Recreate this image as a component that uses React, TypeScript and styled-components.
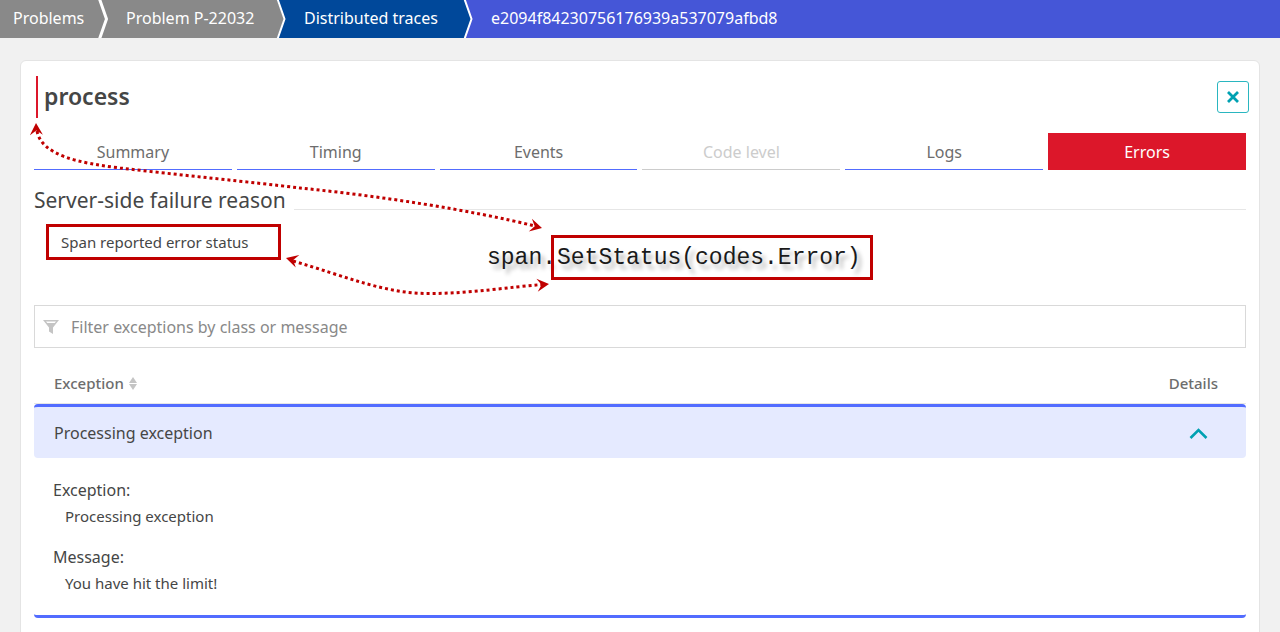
import React from "react";
import styled, { createGlobalStyle, css } from "styled-components";

const GlobalStyle = createGlobalStyle`
  *, *::before, *::after { box-sizing: border-box; }
  html, body, #root { min-height: 100%; }
  html { background: #f1f1f1; overflow: hidden; }
  body {
    margin: 0;
    background: #f1f1f1;
    color: #454646;
    font-family: "Noto Sans", "Open Sans", sans-serif;
    font-size: 16px;
    line-height: 24px;
  }
`;

const Breadcrumbs = styled.nav`
  display: flex;
  height: 38px;
  background: #4556d7;
`;

const Crumb = styled.a<{ $bg: string; $width?: number; $first?: boolean }>`
  flex: none;
  min-width: ${(p) => p.$width ?? 0}px;
  padding: 6px ${(p) => (p.$first ? 13 : 18)}px;
  background: ${(p) => p.$bg};
  color: #fff;
  text-decoration: none;
`;

const SeparatorSvg = styled.svg`
  flex: none;
  display: block;
`;

const Card = styled.main`
  position: relative;
  margin: 22px 20px 0;
  padding: 15px 13px 40px;
  background: #fff;
  border: 1px solid #e4e4e4;
  border-radius: 6px;
`;

const Header = styled.header`
  display: flex;
  align-items: center;
  justify-content: space-between;
  height: 42px;
  margin-right: -3px;
  margin-left: 2px;
`;

const Title = styled.h1`
  height: 42px;
  margin: 0;
  padding-left: 6px;
  border-left: 2px solid #dc172a;
  font-size: 23px;
  font-weight: 600;
  line-height: 40px;
`;

const CloseButton = styled.button`
  display: grid;
  place-items: center;
  width: 32px;
  height: 32px;
  padding: 0;
  background: #fff;
  border: 1px solid #2ab6c0;
  border-radius: 3px;
  color: #00a1b2;
`;

const Tabs = styled.div`
  display: grid;
  grid-template-columns: repeat(6, 1fr);
  gap: 5px;
  margin-top: 15px;
`;

const Tab = styled.button`
  height: 37px;
  padding: 2px 0 0;
  background: transparent;
  border: 0;
  border-bottom: 1px solid #526cff;
  color: #6d6d6d;
  font: inherit;

  &:disabled {
    color: #cccccc;
    border-bottom-color: #cccccc;
  }

  ${(p) =>
    p["aria-selected"] &&
    css`
      background: #dc172a;
      border-bottom-color: #dc172a;
      color: #fff;
    `}
`;

const SectionTitle = styled.h2`
  display: flex;
  align-items: flex-end;
  gap: 8px;
  margin: 14px 0 0;
  font-size: 21px;
  font-weight: 400;
  line-height: 32px;

  &::after {
    content: "";
    flex: 1;
    height: 1px;
    margin-bottom: 6px;
    background: #e6e6e6;
  }
`;

const ReasonRow = styled.div`
  display: flex;
  align-items: flex-start;
  height: 56px;
  margin: 8px 0 25px 12px;
`;

const Reason = styled.p`
  flex: none;
  width: 235px;
  height: 36px;
  margin: 0;
  padding: 0 12px;
  border: 3px solid #c00000;
  font-size: 15px;
  line-height: 30px;
`;

const CodeNote = styled.code`
  display: flex;
  margin: 11px 0 0 206px;
  color: #1a1a1a;
  font-family: "Liberation Mono", monospace;
  font-size: 23px;
  line-height: 38px;
  text-shadow: 4px 5px 4px rgba(0, 0, 0, 0.3);
  white-space: nowrap;
`;

const CodePrefix = styled.span`
  padding-top: 4px;
`;

const CodeHighlight = styled.span`
  margin-left: -5px;
  padding: 1px 9px 0 3px;
  border: 3px solid #c00000;
`;

const FilterBox = styled.label`
  display: flex;
  align-items: center;
  gap: 12px;
  height: 43px;
  padding: 0 8px;
  border: 1px solid #d9d9d9;
`;

const FilterInput = styled.input`
  flex: 1;
  min-width: 0;
  padding: 0;
  border: 0;
  outline: 0;
  background: transparent;
  color: #454646;
  font: inherit;

  &::placeholder {
    color: #898989;
    opacity: 1;
  }
`;

const ExceptionTable = styled.table`
  width: 100%;
  margin-top: 14px;
  border-spacing: 0;
`;

const HeadCell = styled.th<{ $right?: boolean }>`
  height: 42px;
  padding: 0 ${(p) => (p.$right ? 28 : 20)}px 0 20px;
  border-bottom: 1px solid #e6e6e6;
  color: #6d6d6d;
  font-size: 15px;
  font-weight: 500;
  text-align: ${(p) => (p.$right ? "right" : "left")};
`;

const SortButton = styled.button`
  display: inline-flex;
  align-items: center;
  gap: 5px;
  padding: 0;
  background: none;
  border: 0;
  color: inherit;
  font: inherit;
`;

const RowCell = styled.td<{ $right?: boolean }>`
  height: 54px;
  padding: 0 ${(p) => (p.$right ? 37 : 20)}px 0 20px;
  background: #e5eaff;
  border-top: 3px solid #526cff;
  border-radius: ${(p) => (p.$right ? "0 4px 4px 0" : "4px 0 0 4px")};
  text-align: ${(p) => (p.$right ? "right" : "left")};
`;

const ToggleButton = styled.button`
  display: inline-flex;
  padding: 0;
  background: none;
  border: 0;
  color: #00a1b2;
  vertical-align: middle;
`;

const DetailCell = styled.td`
  padding: 19px 19px 19px;
  border-bottom: 3px solid #526cff;
  border-radius: 4px;
  vertical-align: top;
`;

const Details = styled.dl`
  display: grid;
  gap: 15px;
  margin: 0;
`;

const DetailTerm = styled.dt`
  line-height: 26px;
`;

const DetailText = styled.dd`
  margin: 0 0 0 12px;
  font-size: 15px;
  line-height: 26px;
`;

const Arrows = styled.svg`
  position: absolute;
  top: 59px;
  left: 9px;
  pointer-events: none;
`;

function Separator({ from, to, line = 2 }: { from: string; to: string; line?: number }) {
  return (
    <SeparatorSvg width="10" height="38" viewBox="0 0 10 38" aria-hidden="true">
      <rect width="10" height="38" fill={to} />
      <path d="M0 0H1L8 19L1 38H0Z" fill={from} />
      <path d="M1.5 -1L8.5 19L1.5 39" fill="none" stroke="#fff" strokeWidth={line} />
    </SeparatorSvg>
  );
}

const ARROW_HEAD = "M0 0L-12 6.5L-7.500 0L-12 -6.5Z";

const tabs = ["Summary", "Timing", "Events", "Code level", "Logs", "Errors"];

export default function App() {
  return (
    <>
      <GlobalStyle />
      <Breadcrumbs aria-label="Breadcrumb">
        <Crumb href="#problems" $bg="#898989" $width={98} $first>Problems</Crumb>
        <Separator from="#898989" to="#898989" line={3} />
        <Crumb href="#problem" $bg="#898989" $width={168}>Problem P-22032</Crumb>
        <Separator from="#898989" to="#00489a" />
        <Crumb href="#traces" $bg="#00489a" $width={177}>Distributed traces</Crumb>
        <Separator from="#00489a" to="#4556d7" />
        <Crumb href="#trace" $bg="#4556d7">e2094f84230756176939a537079afbd8</Crumb>
      </Breadcrumbs>
      <Card>
        <Header>
          <Title>process</Title>
          <CloseButton aria-label="Close">
            <svg width="12" height="12" viewBox="0 0 12 12" aria-hidden="true">
              <path d="M1 1L11 11M11 1L1 11" stroke="currentColor" strokeWidth="2.8" />
            </svg>
          </CloseButton>
        </Header>
        <Tabs role="tablist">
          {tabs.map((name) => (
            <Tab key={name} role="tab" aria-selected={name === "Errors"} disabled={name === "Code level"}>
              {name}
            </Tab>
          ))}
        </Tabs>
        <SectionTitle>Server-side failure reason</SectionTitle>
        <ReasonRow>
          <Reason>Span reported error status</Reason>
          <CodeNote>
            <CodePrefix>span.</CodePrefix>
            <CodeHighlight>SetStatus(codes.Error)</CodeHighlight>
          </CodeNote>
        </ReasonRow>
        <FilterBox>
          <svg width="16" height="15" viewBox="0 0 16 15" aria-hidden="true">
            <path d="M0 1H16L10 8.5V15L6 12.5V8.5ZM3 2.500L4.300 4H11.700L13 2.500Z" fill="#c4c4c4" fillRule="evenodd" />
          </svg>
          <FilterInput placeholder="Filter exceptions by class or message" aria-label="Filter exceptions" />
        </FilterBox>
        <ExceptionTable>
          <thead>
            <tr>
              <HeadCell>
                <SortButton>
                  Exception
                  <svg width="8" height="15" viewBox="0 0 8 15" aria-hidden="true">
                    <path d="M4 2L8 8H0ZM0 9H8L4 15Z" fill="#c4c4c4" />
                  </svg>
                </SortButton>
              </HeadCell>
              <HeadCell $right>Details</HeadCell>
            </tr>
          </thead>
          <tbody>
            <tr>
              <RowCell>Processing exception</RowCell>
              <RowCell $right>
                <ToggleButton aria-label="Collapse details" aria-expanded="true">
                  <svg width="20" height="12" viewBox="0 0 20 12" aria-hidden="true">
                    <path d="M1.500 10L9.500 2L17.500 10" fill="none" stroke="currentColor" strokeWidth="2.6" />
                  </svg>
                </ToggleButton>
              </RowCell>
            </tr>
            <tr>
              <DetailCell colSpan={2}>
                <Details>
                  <div>
                    <DetailTerm>Exception:</DetailTerm>
                    <DetailText>Processing exception</DetailText>
                  </div>
                  <div>
                    <DetailTerm>Message:</DetailTerm>
                    <DetailText>You have hit the limit!</DetailText>
                  </div>
                </Details>
              </DetailCell>
            </tr>
          </tbody>
        </ExceptionTable>
        <Arrows width="530" height="180" viewBox="30 120 530 180" aria-hidden="true">
          <g fill="none" stroke="#c00000" strokeWidth="3" strokeDasharray="3 3">
            <path d="M37 131C42 156 80 163 120 168C180 175 250 182 300 188C380 196 470 210 535 226" />
            <path d="M293 261C345 276 385 294 430 293.500C470 293.500 510 287 542 284.500" />
          </g>
          <g fill="#c00000">
            <path d={ARROW_HEAD} transform="translate(36 123) rotate(-92)" />
            <path d={ARROW_HEAD} transform="translate(542 228) rotate(14)" />
            <path d={ARROW_HEAD} transform="translate(286 258) rotate(196)" />
            <path d={ARROW_HEAD} transform="translate(549 284) rotate(-6)" />
          </g>
        </Arrows>
      </Card>
    </>
  );
}
